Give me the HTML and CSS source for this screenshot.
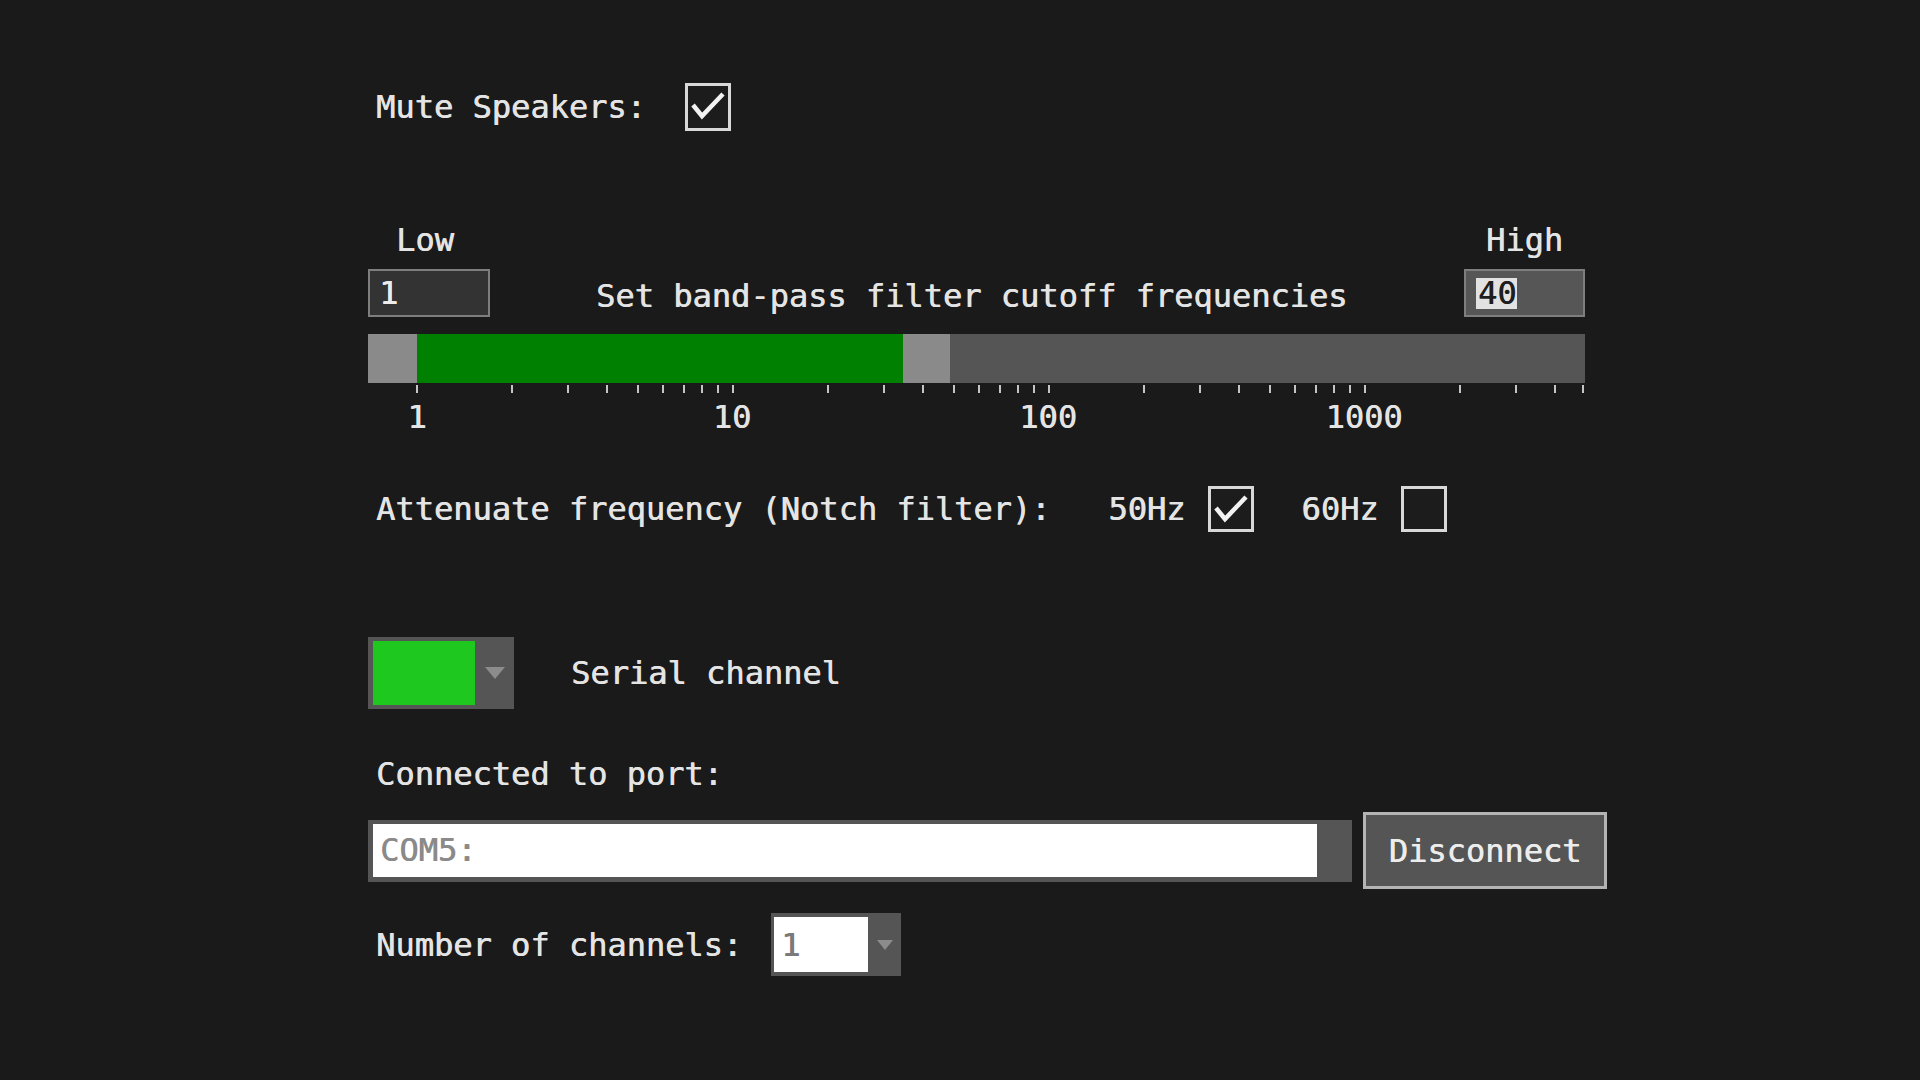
FILE: index.html
```html
<!DOCTYPE html>
<html lang="en">
<head>
<meta charset="utf-8">
<title>Filter settings</title>
<link rel="stylesheet" href="styles.css">
</head>
<body>
<div class="panel">
  <div class="mute-row">
    <span class="text">Mute Speakers:</span>
    <span class="checkbox tall"><svg class="check" viewBox="0 0 40 40"><polyline points="5,19 14,30 35,8"/></svg></span>
  </div>

  <div class="range-grid">
    <div class="range-label low-label">Low</div>
    <div class="range-label high-label">High</div>
    <div class="num-input low-input">1</div>
    <div class="range-caption">Set band-pass filter cutoff frequencies</div>
    <div class="num-input high-input"><span class="caret"></span><span class="selected">40</span></div>
  </div>

  <div class="slider">
    <div class="handle handle-low"></div>
    <div class="fill"></div>
    <div class="handle handle-high"></div>
    <div class="rest"></div>
  </div>

  <div class="scale">
    <svg class="ticks" width="1217" height="8" viewBox="0 0 1217 8">
      <g stroke="#c4c4c4" stroke-width="2">
        <line x1="49" y1="0" x2="49" y2="8"/><line x1="144" y1="0" x2="144" y2="8"/><line x1="200" y1="0" x2="200" y2="8"/><line x1="239" y1="0" x2="239" y2="8"/><line x1="270" y1="0" x2="270" y2="8"/><line x1="295" y1="0" x2="295" y2="8"/><line x1="316" y1="0" x2="316" y2="8"/><line x1="334" y1="0" x2="334" y2="8"/><line x1="350" y1="0" x2="350" y2="8"/>
        <line x1="365" y1="0" x2="365" y2="8"/><line x1="460" y1="0" x2="460" y2="8"/><line x1="516" y1="0" x2="516" y2="8"/><line x1="555" y1="0" x2="555" y2="8"/><line x1="586" y1="0" x2="586" y2="8"/><line x1="611" y1="0" x2="611" y2="8"/><line x1="632" y1="0" x2="632" y2="8"/><line x1="650" y1="0" x2="650" y2="8"/><line x1="666" y1="0" x2="666" y2="8"/>
        <line x1="681" y1="0" x2="681" y2="8"/><line x1="776" y1="0" x2="776" y2="8"/><line x1="832" y1="0" x2="832" y2="8"/><line x1="871" y1="0" x2="871" y2="8"/><line x1="902" y1="0" x2="902" y2="8"/><line x1="927" y1="0" x2="927" y2="8"/><line x1="948" y1="0" x2="948" y2="8"/><line x1="966" y1="0" x2="966" y2="8"/><line x1="982" y1="0" x2="982" y2="8"/>
        <line x1="997" y1="0" x2="997" y2="8"/><line x1="1092" y1="0" x2="1092" y2="8"/><line x1="1148" y1="0" x2="1148" y2="8"/><line x1="1187" y1="0" x2="1187" y2="8"/><line x1="1215" y1="0" x2="1215" y2="8"/>
      </g>
    </svg>
    <div class="scale-labels">
      <span class="tick-label" style="left:49px">1</span>
      <span class="tick-label" style="left:364px">10</span>
      <span class="tick-label" style="left:680px">100</span>
      <span class="tick-label" style="left:996px">1000</span>
    </div>
  </div>

  <div class="notch-row">
    <span class="text">Attenuate frequency (Notch filter):</span>
    <span class="text hz first-hz">50Hz</span>
    <span class="checkbox box-gap"><svg class="check" viewBox="0 0 40 40"><polyline points="5,19 14,30 35,8"/></svg></span>
    <span class="text hz second-hz">60Hz</span>
    <span class="checkbox box-gap"></span>
  </div>

  <div class="serial-row">
    <div class="color-select">
      <div class="swatch"></div>
      <div class="arrow-zone"><span class="arrow"></span></div>
    </div>
    <span class="text serial-label">Serial channel</span>
  </div>

  <div class="connected-label text">Connected to port:</div>

  <div class="port-row">
    <div class="port-field">
      <div class="port-value">COM5:</div>
    </div>
    <button class="disconnect" type="button">Disconnect</button>
  </div>

  <div class="channels-row">
    <span class="text">Number of channels:</span>
    <div class="channel-select">
      <div class="channel-value">1</div>
      <div class="arrow-zone"><span class="arrow small"></span></div>
    </div>
  </div>
</div>
</body>
</html>
```

FILE: styles.css
```css
html, body {
  margin: 0;
  height: 100%;
}

body {
  background: #1a1a1a;
  color: #e4e4e4;
  font-family: "DejaVu Sans Mono", "Liberation Mono", monospace;
  font-size: 32px;
  line-height: 32px;
  overflow: hidden;
  text-shadow: 0.6px 0 0 currentColor;
}

.panel {
  display: flex;
  flex-direction: column;
  align-items: flex-start;
  padding: 83px 0 0 368px;
  width: 1260px;
}

.text {
  white-space: pre;
}

/* checkbox */
.checkbox {
  box-sizing: border-box;
  width: 46px;
  height: 46px;
  border: 3px solid #d8d8d8;
  background: #1c1c1c;
  display: flex;
}

.checkbox.tall {
  height: 48px;
}

.check {
  width: 40px;
  height: 40px;
  fill: none;
  stroke: #f2f2f2;
  stroke-width: 4.5;
  stroke-linejoin: miter;
}

/* mute */
.mute-row {
  display: flex;
  align-items: center;
  gap: 39px;
  padding-left: 8px;
  height: 48px;
}

/* range */
.range-grid {
  margin-top: 93px;
  width: 1217px;
  display: grid;
  grid-template-columns: 122px 1fr 121px;
  grid-template-rows: 32px 48px;
  row-gap: 13px;
}

.range-label {
  grid-row: 1;
}

.low-label {
  grid-column: 1;
  padding-left: 28px;
}

.high-label {
  grid-column: 3;
  justify-self: center;
}

.num-input {
  grid-row: 2;
  box-sizing: border-box;
  border: 2px solid #7e7e7e;
  display: flex;
  align-items: center;
  padding-left: 9px;
  color: #ececec;
}

.low-input {
  grid-column: 1;
  background: #333333;
}

.high-input {
  grid-column: 3;
  background: #565656;
  padding-left: 10px;
}

.selected {
  background: #e2e2e2;
  color: #1e1e1e;
  line-height: 31px;
}

.caret {
  width: 2px;
  height: 31px;
  background: #e2e2e2;
}

.range-caption {
  grid-column: 2;
  grid-row: 2;
  align-self: center;
  padding-left: 106px;
  padding-top: 5px;
  white-space: pre;
}

/* slider */
.slider {
  margin-top: 17px;
  width: 1217px;
  height: 49px;
  display: flex;
}

.handle {
  background: #8a8a8a;
}

.handle-low {
  width: 49px;
}

.fill {
  width: 486px;
  background: #008000;
}

.handle-high {
  width: 47px;
}

.rest {
  flex: 1;
  background: #555555;
}

.scale {
  width: 1217px;
}

.ticks {
  display: block;
  margin-top: 2px;
}

.scale-labels {
  position: relative;
  margin-top: 8px;
  height: 32px;
}

.tick-label {
  position: absolute;
  top: 0;
  transform: translateX(-50%);
}

/* notch */
.notch-row {
  margin-top: 53px;
  display: flex;
  align-items: center;
  height: 46px;
  padding-left: 8px;
}

.first-hz {
  margin-left: 58px;
}

.second-hz {
  margin-left: 47px;
}

.hz + .checkbox {
  margin-left: 23px;
}

/* serial */
.serial-row {
  margin-top: 105px;
  display: flex;
  align-items: center;
  height: 72px;
}

.color-select {
  box-sizing: border-box;
  width: 146px;
  height: 72px;
  background: #555555;
  display: flex;
  padding: 4px 0 4px 5px;
}

.swatch {
  width: 102px;
  background: #1ec81e;
}

.arrow-zone {
  flex: 1;
  display: flex;
  align-items: center;
  justify-content: center;
}

.arrow {
  width: 0;
  height: 0;
  border-left: 10px solid transparent;
  border-right: 10px solid transparent;
  border-top: 12px solid #8c8c8c;
}

.arrow.small {
  border-left-width: 8px;
  border-right-width: 8px;
  border-top-width: 10px;
}

.serial-label {
  margin-left: 57px;
}

/* connected */
.connected-label {
  margin-top: 49px;
  padding-left: 8px;
  height: 32px;
}

.port-row {
  margin-top: 22px;
  display: flex;
  align-items: center;
  height: 77px;
}

.port-field {
  box-sizing: border-box;
  width: 984px;
  height: 62px;
  background: #555555;
  padding: 4px 35px 5px 5px;
  display: flex;
}

.port-value {
  flex: 1;
  background: #ffffff;
  color: #8a8a8a;
  padding-left: 7px;
  display: flex;
  align-items: center;
}

.disconnect {
  margin-left: 11px;
  box-sizing: border-box;
  width: 244px;
  height: 77px;
  border: 3px solid #b4b4b4;
  background: #555555;
  color: #ececec;
  font-family: inherit;
  font-size: 32px;
  line-height: 32px;
  padding: 0;
  text-shadow: 0.6px 0 0 currentColor;
}

/* channels */
.channels-row {
  margin-top: 24px;
  display: flex;
  align-items: center;
  height: 63px;
  padding-left: 8px;
}

.channel-select {
  margin-left: 29px;
  box-sizing: border-box;
  width: 130px;
  height: 63px;
  background: #555555;
  padding: 4px 0 4px 3px;
  display: flex;
}

.channel-value {
  width: 94px;
  background: #ffffff;
  color: #7a7a7a;
  padding-left: 7px;
  box-sizing: border-box;
  display: flex;
  align-items: center;
}
```
